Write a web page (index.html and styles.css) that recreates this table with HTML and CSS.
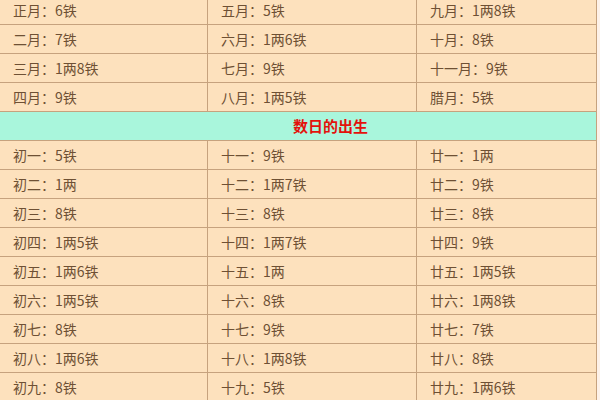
FILE: index.html
```html
<!DOCTYPE html>
<html lang="zh">
<head>
<meta charset="utf-8">
<link rel="stylesheet" href="styles.css">
</head>
<body>
<table class="grid">
<colgroup><col class="c1"><col class="c2"><col class="c3"></colgroup>
<tbody>
<tr><td>正月：6铁</td><td>五月：5铁</td><td>九月：1两8铁</td></tr>
<tr><td>二月：7铁</td><td>六月：1两6铁</td><td>十月：8铁</td></tr>
<tr><td>三月：1两8铁</td><td>七月：9铁</td><td>十一月：9铁</td></tr>
<tr><td>四月：9铁</td><td>八月：1两5铁</td><td>腊月：5铁</td></tr>
<tr class="head"><td colspan="3">数日的出生</td></tr>
<tr><td>初一：5铁</td><td>十一：9铁</td><td>廿一：1两</td></tr>
<tr><td>初二：1两</td><td>十二：1两7铁</td><td>廿二：9铁</td></tr>
<tr><td>初三：8铁</td><td>十三：8铁</td><td>廿三：8铁</td></tr>
<tr><td>初四：1两5铁</td><td>十四：1两7铁</td><td>廿四：9铁</td></tr>
<tr><td>初五：1两6铁</td><td>十五：1两</td><td>廿五：1两5铁</td></tr>
<tr><td>初六：1两5铁</td><td>十六：8铁</td><td>廿六：1两8铁</td></tr>
<tr><td>初七：8铁</td><td>十七：9铁</td><td>廿七：7铁</td></tr>
<tr><td>初八：1两6铁</td><td>十八：1两8铁</td><td>廿八：8铁</td></tr>
<tr><td>初九：8铁</td><td>十九：5铁</td><td>廿九：1两6铁</td></tr>
</tbody>
</table>
</body>
</html>
```

FILE: styles.css
```css
html, body {
  margin: 0;
  padding: 0;
  background: #fdf1e8;
  overflow: hidden;
}
.grid {
  border-collapse: collapse;
  table-layout: fixed;
  width: 597px;
  margin-top: -5px;
  margin-left: -1px;
  font-family: "Noto Sans CJK SC", "DejaVu Sans", sans-serif;
  font-size: 14px;
  color: #6e5034;
}
.c1 { width: 208px; }
.c2 { width: 209px; }
.c3 { width: 180px; }
.grid td {
  background: #fde1bd;
  border: 1px solid #c6a27e;
  height: 28px;
  padding: 0 0 0 13px;
  line-height: 28px;
  white-space: nowrap;
  overflow: hidden;
}
.grid .head td {
  background: #a9f6dc;
  color: #e3120c;
  font-weight: bold;
  font-size: 15px;
  padding-left: 293px;
}
```
